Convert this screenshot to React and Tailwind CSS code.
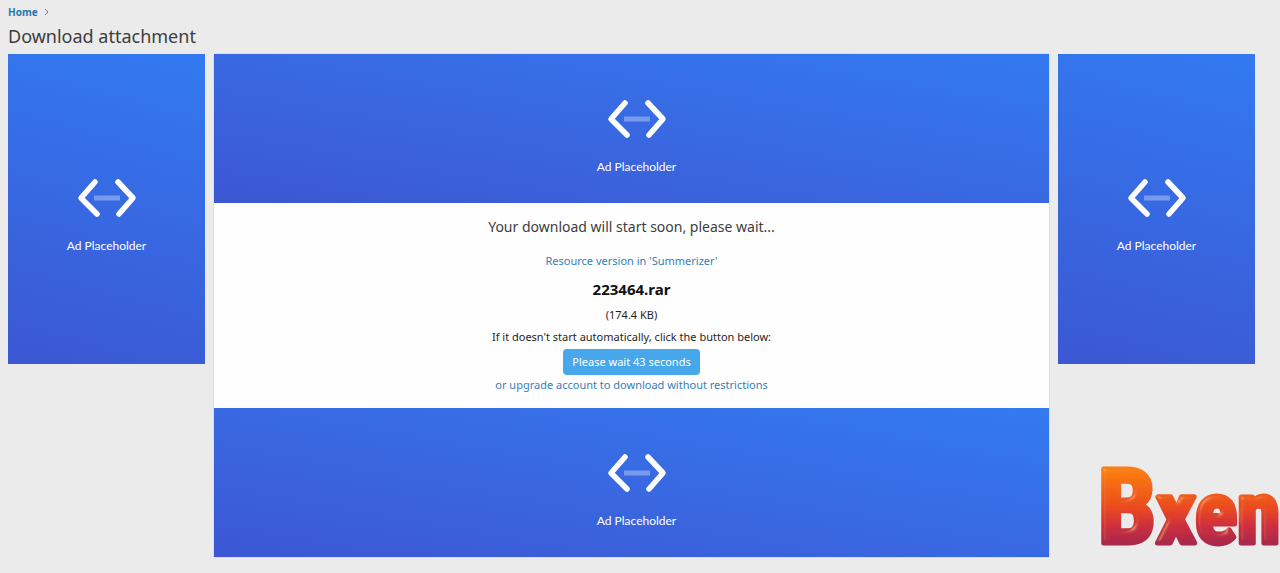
import { useEffect } from "react";

const CodeIcon = () => (
  <svg width="60" height="40" viewBox="0 0 60 40" fill="none" aria-hidden="true">
    <path d="M17 17.5h26v5H17z" fill="#fff" fillOpacity="0.32" />
    <path
      d="M18 4 4 20l16 16M41 4l15 16-14 16"
      stroke="#fff"
      strokeWidth="5.5"
      strokeLinecap="round"
      strokeLinejoin="round"
    />
  </svg>
);

const AdLabel = () => (
  <>
    <CodeIcon />
    <span className="mt-[18px] font-[family-name:Lato,sans-serif] text-xs leading-5 text-white">
      Ad Placeholder
    </span>
  </>
);

const BannerAd = () => (
  <div className="flex h-[149px] flex-col items-center justify-center bg-linear-to-tr from-[#3c57d3] to-[#327af1] pt-[18px] pl-2.5">
    <AdLabel />
  </div>
);

const SideAd = () => (
  <aside className="flex h-[310px] flex-col items-center justify-center bg-linear-[195deg] from-[#327af1] to-[#3c57d3] pt-4">
    <AdLabel />
  </aside>
);

const Logo = () => (
  <svg
    className="pointer-events-none absolute right-0 bottom-0 h-[190px] w-[200px]"
    viewBox="0 0 200 190"
    role="img"
    aria-label="Bxen"
  >
    <defs>
      <linearGradient id="logoFill" x1="0" y1="0" x2="0" y2="1">
        <stop offset="0.2" stopColor="#fb7d15" />
        <stop offset="0.5" stopColor="#ea4b24" />
        <stop offset="0.65" stopColor="#cf2f40" />
        <stop offset="0.8" stopColor="#a82a4c" />
      </linearGradient>
      <filter id="gloss" x="-5%" y="-5%" width="110%" height="110%">
        <feGaussianBlur in="SourceAlpha" stdDeviation="2" result="soft" />
        <feSpecularLighting
          in="soft"
          surfaceScale="3"
          specularConstant="0.5"
          specularExponent="40"
          lightingColor="#ffb070"
          result="shine"
        >
          <feDistantLight azimuth="225" elevation="40" />
        </feSpecularLighting>
        <feComposite in="shine" in2="SourceAlpha" operator="in" result="shine" />
        <feMerge>
          <feMergeNode in="SourceGraphic" />
          <feMergeNode in="shine" />
        </feMerge>
      </filter>
    </defs>
    <text
      x="109"
      y="160"
      textAnchor="middle"
      className="font-[family-name:'Liberation_Sans_Narrow','Roboto_Condensed',Roboto,sans-serif] text-[88px] font-bold"
      fill="url(#logoFill)"
      stroke="url(#logoFill)"
      strokeWidth="5"
      strokeLinejoin="round"
      filter="url(#gloss)"
    >
      <tspan className="text-[104px]">B</tspan>xen
    </text>
  </svg>
);

const App = () => {
  useEffect(() => {
    document.title = "Download attachment";
  }, []);

  return (
    <div className="relative min-h-screen bg-[#ebebeb] pr-[25px] pb-4 pl-2 font-[family-name:'Noto_Sans',sans-serif] text-[11px] text-[#1f1f1f]">
      <nav className="flex h-6 items-center gap-1.5 text-[10px]">
        <a href="#" className="font-bold text-[#2577b1]">
          Home
        </a>
        <svg width="5" height="8" viewBox="0 0 5 8" fill="none" stroke="#777" aria-hidden="true">
          <path d="m1 1 3 3-3 3" />
        </svg>
      </nav>
      <h1 className="mb-1.5 text-lg leading-6 text-[#3d3d3d]">Download attachment</h1>
      <div className="grid grid-cols-[197px_1fr_197px] items-start gap-[9px]">
        <SideAd />
        <main className="bg-[#fefefe] shadow-[0_0_1px_#999]">
          <BannerAd />
          <div className="flex h-[205px] flex-col items-center pt-3 text-center">
            <h2 className="text-sm leading-6 text-[#3d3d3d]">
              Your download will start soon, please wait...
            </h2>
            <a href="#" className="mt-3 leading-5 text-[#3581b8]">
              Resource version in 'Summerizer'
            </a>
            <h3 className="mt-1 text-[15px] leading-7 font-bold text-[#111]">223464.rar</h3>
            <p className="mt-0.5 leading-5">(174.4 KB)</p>
            <p className="leading-6">If it doesn't start automatically, click the button below:</p>
            <button type="button" className="h-[26px] rounded-sm bg-[#47a7eb] px-[9px] text-white">
              Please wait 43 seconds
            </button>
            <a href="#" className="leading-5 text-[#3581b8]">
              or upgrade account to download without restrictions
            </a>
          </div>
          <BannerAd />
        </main>
        <SideAd />
      </div>
      <Logo />
    </div>
  );
};

export default App;
